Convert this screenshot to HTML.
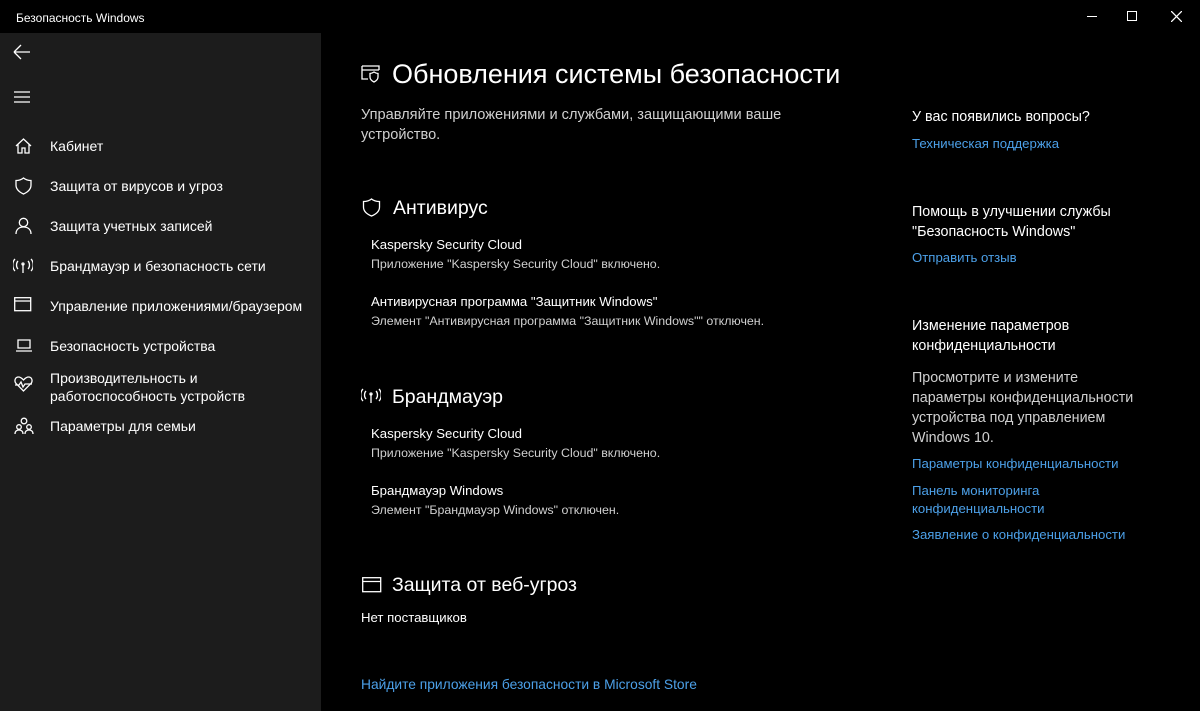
<!DOCTYPE html>
<html><head><meta charset="utf-8"><style>
*{margin:0;padding:0;box-sizing:border-box}
body{width:1200px;height:711px;background:#000;color:#fff;font-family:"Liberation Sans","DejaVu Sans",sans-serif;position:relative;overflow:hidden}
.a{position:absolute;white-space:nowrap}
.side{position:absolute;left:0;top:33px;width:321px;height:678px;background:#1c1c1c}
.nav{font-size:14px;color:#fff}
.ic{position:absolute}
.lk{color:#4ca0e8;font-size:14px}
.g{color:#d0d0d0}
svg{stroke:#fff;fill:none;stroke-width:1.3}
</style></head><body>
<div class="a" style="left:16px;top:11px;font-size:12px">Безопасность Windows</div>
<div class="a" style="left:1087px;top:16px;width:10px;height:1px;background:#fff"></div>
<div class="a" style="left:1127px;top:11px;width:10px;height:10px;border:1px solid #fff"></div>
<svg class="ic" style="left:1171px;top:11px" width="11" height="11"><path d="M0 0L11 11M11 0L0 11"/></svg>
<div class="side"></div>
<svg class="ic" style="left:13px;top:44px" width="18" height="16"><path d="M1 8H17M1 8L8 1M1 8L8 15"/></svg>
<svg class="ic" style="left:14px;top:91px" width="17" height="12"><path d="M0 1H16M0 6H16M0 11H16"/></svg>
<svg class="ic" style="left:15px;top:138px" width="17" height="16"><path d="M1 8L8.5 1L16 8M3 6V15H7V10H10V15H14V6"/></svg>
<svg class="ic" style="left:15px;top:177px" width="17" height="18"><path d="M8.5 1C6 3 3.5 3.5 1 3.5V8C1 12 4 15 8.5 17C13 15 16 12 16 8V3.5C13.5 3.5 11 3 8.5 1Z"/></svg>
<svg class="ic" style="left:15px;top:217px" width="17" height="18"><circle cx="8.5" cy="5.5" r="4.2"/><path d="M1 17C1 12.5 4 10 8.5 10S16 12.5 16 17"/></svg>
<svg class="ic" style="left:13px;top:258px" width="20" height="16"><path d="M10 6V15M5 3C3 5 3 9 5 11M15 3C17 5 17 9 15 11M2 1C-1 4 -1 10 2 13M18 1C21 4 21 10 18 13"/><circle cx="10" cy="6" r="1"/></svg>
<svg class="ic" style="left:14px;top:297px" width="18" height="15"><rect x="0.7" y="0.7" width="16" height="13"/><path d="M1 4H17"/></svg>
<svg class="ic" style="left:15px;top:339px" width="18" height="14"><path d="M3 1H15V9H3ZM1 12H17"/></svg>
<svg class="ic" style="left:14px;top:375px" width="19" height="18"><path d="M9.5 16L2 8.5C0 6 1 2 4.5 2C7 2 8.5 4 9.5 5C10.5 4 12 2 14.5 2C18 2 19 6 17 8.5ZM1 10H5L7 7L9 12L11 9H18"/></svg>
<svg class="ic" style="left:14px;top:417px" width="20" height="18"><circle cx="10" cy="4" r="2.8"/><circle cx="5" cy="10" r="2.3"/><circle cx="15" cy="10" r="2.3"/><path d="M1 17C1 14 3 13 5 13S9 14 9 17M11 17C11 14 13 13 15 13S19 14 19 17"/></svg>
<div class="a nav" style="left:50px;top:138px">Кабинет</div>
<div class="a nav" style="left:50px;top:178px">Защита от вирусов и угроз</div>
<div class="a nav" style="left:50px;top:218px">Защита учетных записей</div>
<div class="a nav" style="left:50px;top:258px">Брандмауэр и безопасность сети</div>
<div class="a nav" style="left:50px;top:298px">Управление приложениями/браузером</div>
<div class="a nav" style="left:50px;top:338px">Безопасность устройства</div>
<div class="a nav" style="left:50px;top:369px;line-height:18px">Производительность и<br>работоспособность устройств</div>
<div class="a nav" style="left:50px;top:418px">Параметры для семьи</div>

<svg class="ic" style="left:361px;top:65px" width="20" height="18"><path d="M1 1H18V5M1 1V14H7M1 5H18"/><path d="M13 7C11.5 8 10 8.5 9 8.5V12C9 14.5 11 16 13 17C15 16 17 14.5 17 12V8.5C16 8.5 14.5 8 13 7Z"/></svg>
<div class="a" style="left:392px;top:59px;font-size:27px">Обновления системы безопасности</div>
<div class="a g" style="left:361px;top:105px;font-size:14.6px;line-height:20px">Управляйте приложениями и службами, защищающими ваше<br>устройство.</div>
<svg class="ic" style="left:362px;top:198px" width="19" height="19"><path d="M9.5 1C7 3 4 3.5 1.5 3.5V9C1.5 13 4.5 16 9.5 18C14.5 16 17.5 13 17.5 9V3.5C15 3.5 12 3 9.5 1Z"/></svg>
<div class="a" style="left:393px;top:197px;font-size:19.5px">Антивирус</div>
<div class="a" style="left:371px;top:237px;font-size:13.2px">Kaspersky Security Cloud</div>
<div class="a g" style="left:371px;top:257px;font-size:12.4px">Приложение "Kaspersky Security Cloud" включено.</div>
<div class="a" style="left:371px;top:294px;font-size:13.2px">Антивирусная программа "Защитник Windows"</div>
<div class="a g" style="left:371px;top:314px;font-size:12.4px">Элемент "Антивирусная программа "Защитник Windows"" отключен.</div>
<svg class="ic" style="left:361px;top:388px" width="20" height="16"><path d="M10 6V15M5 3C3 5 3 9 5 11M15 3C17 5 17 9 15 11M2 1C-1 4 -1 10 2 13M18 1C21 4 21 10 18 13"/><circle cx="10" cy="6" r="1"/></svg>
<div class="a" style="left:392px;top:386px;font-size:19.5px">Брандмауэр</div>
<div class="a" style="left:371px;top:426px;font-size:13.2px">Kaspersky Security Cloud</div>
<div class="a g" style="left:371px;top:446px;font-size:12.4px">Приложение "Kaspersky Security Cloud" включено.</div>
<div class="a" style="left:371px;top:483px;font-size:13.2px">Брандмауэр Windows</div>
<div class="a g" style="left:371px;top:503px;font-size:12.4px">Элемент "Брандмауэр Windows" отключен.</div>
<svg class="ic" style="left:362px;top:577px" width="20" height="16"><rect x="0.7" y="0.7" width="18" height="14"/><path d="M1 4.5H19"/></svg>
<div class="a" style="left:392px;top:574px;font-size:19.5px">Защита от веб-угроз</div>
<div class="a" style="left:361px;top:610px;font-size:13.2px">Нет поставщиков</div>
<div class="a lk" style="left:361px;top:677px;font-size:13.8px">Найдите приложения безопасности в Microsoft Store</div>

<div class="a" style="left:912px;top:109px;font-size:14.3px">У вас появились вопросы?</div>
<div class="a lk" style="left:912px;top:136px;font-size:13.2px">Техническая поддержка</div>
<div class="a" style="left:912px;top:202px;font-size:14.3px;line-height:20px">Помощь в улучшении службы<br>"Безопасность Windows"</div>
<div class="a lk" style="left:912px;top:250px;font-size:13.2px">Отправить отзыв</div>
<div class="a" style="left:912px;top:316px;font-size:14.3px;line-height:20px">Изменение параметров<br>конфиденциальности</div>
<div class="a g" style="left:912px;top:368px;font-size:14.3px;line-height:20px">Просмотрите и измените<br>параметры конфиденциальности<br>устройства под управлением<br>Windows 10.</div>
<div class="a lk" style="left:912px;top:456px;font-size:13.2px">Параметры конфиденциальности</div>
<div class="a lk" style="left:912px;top:482px;font-size:13.2px;line-height:18px">Панель мониторинга<br>конфиденциальности</div>
<div class="a lk" style="left:912px;top:527px;font-size:13.2px">Заявление о конфиденциальности</div>
</body></html>
